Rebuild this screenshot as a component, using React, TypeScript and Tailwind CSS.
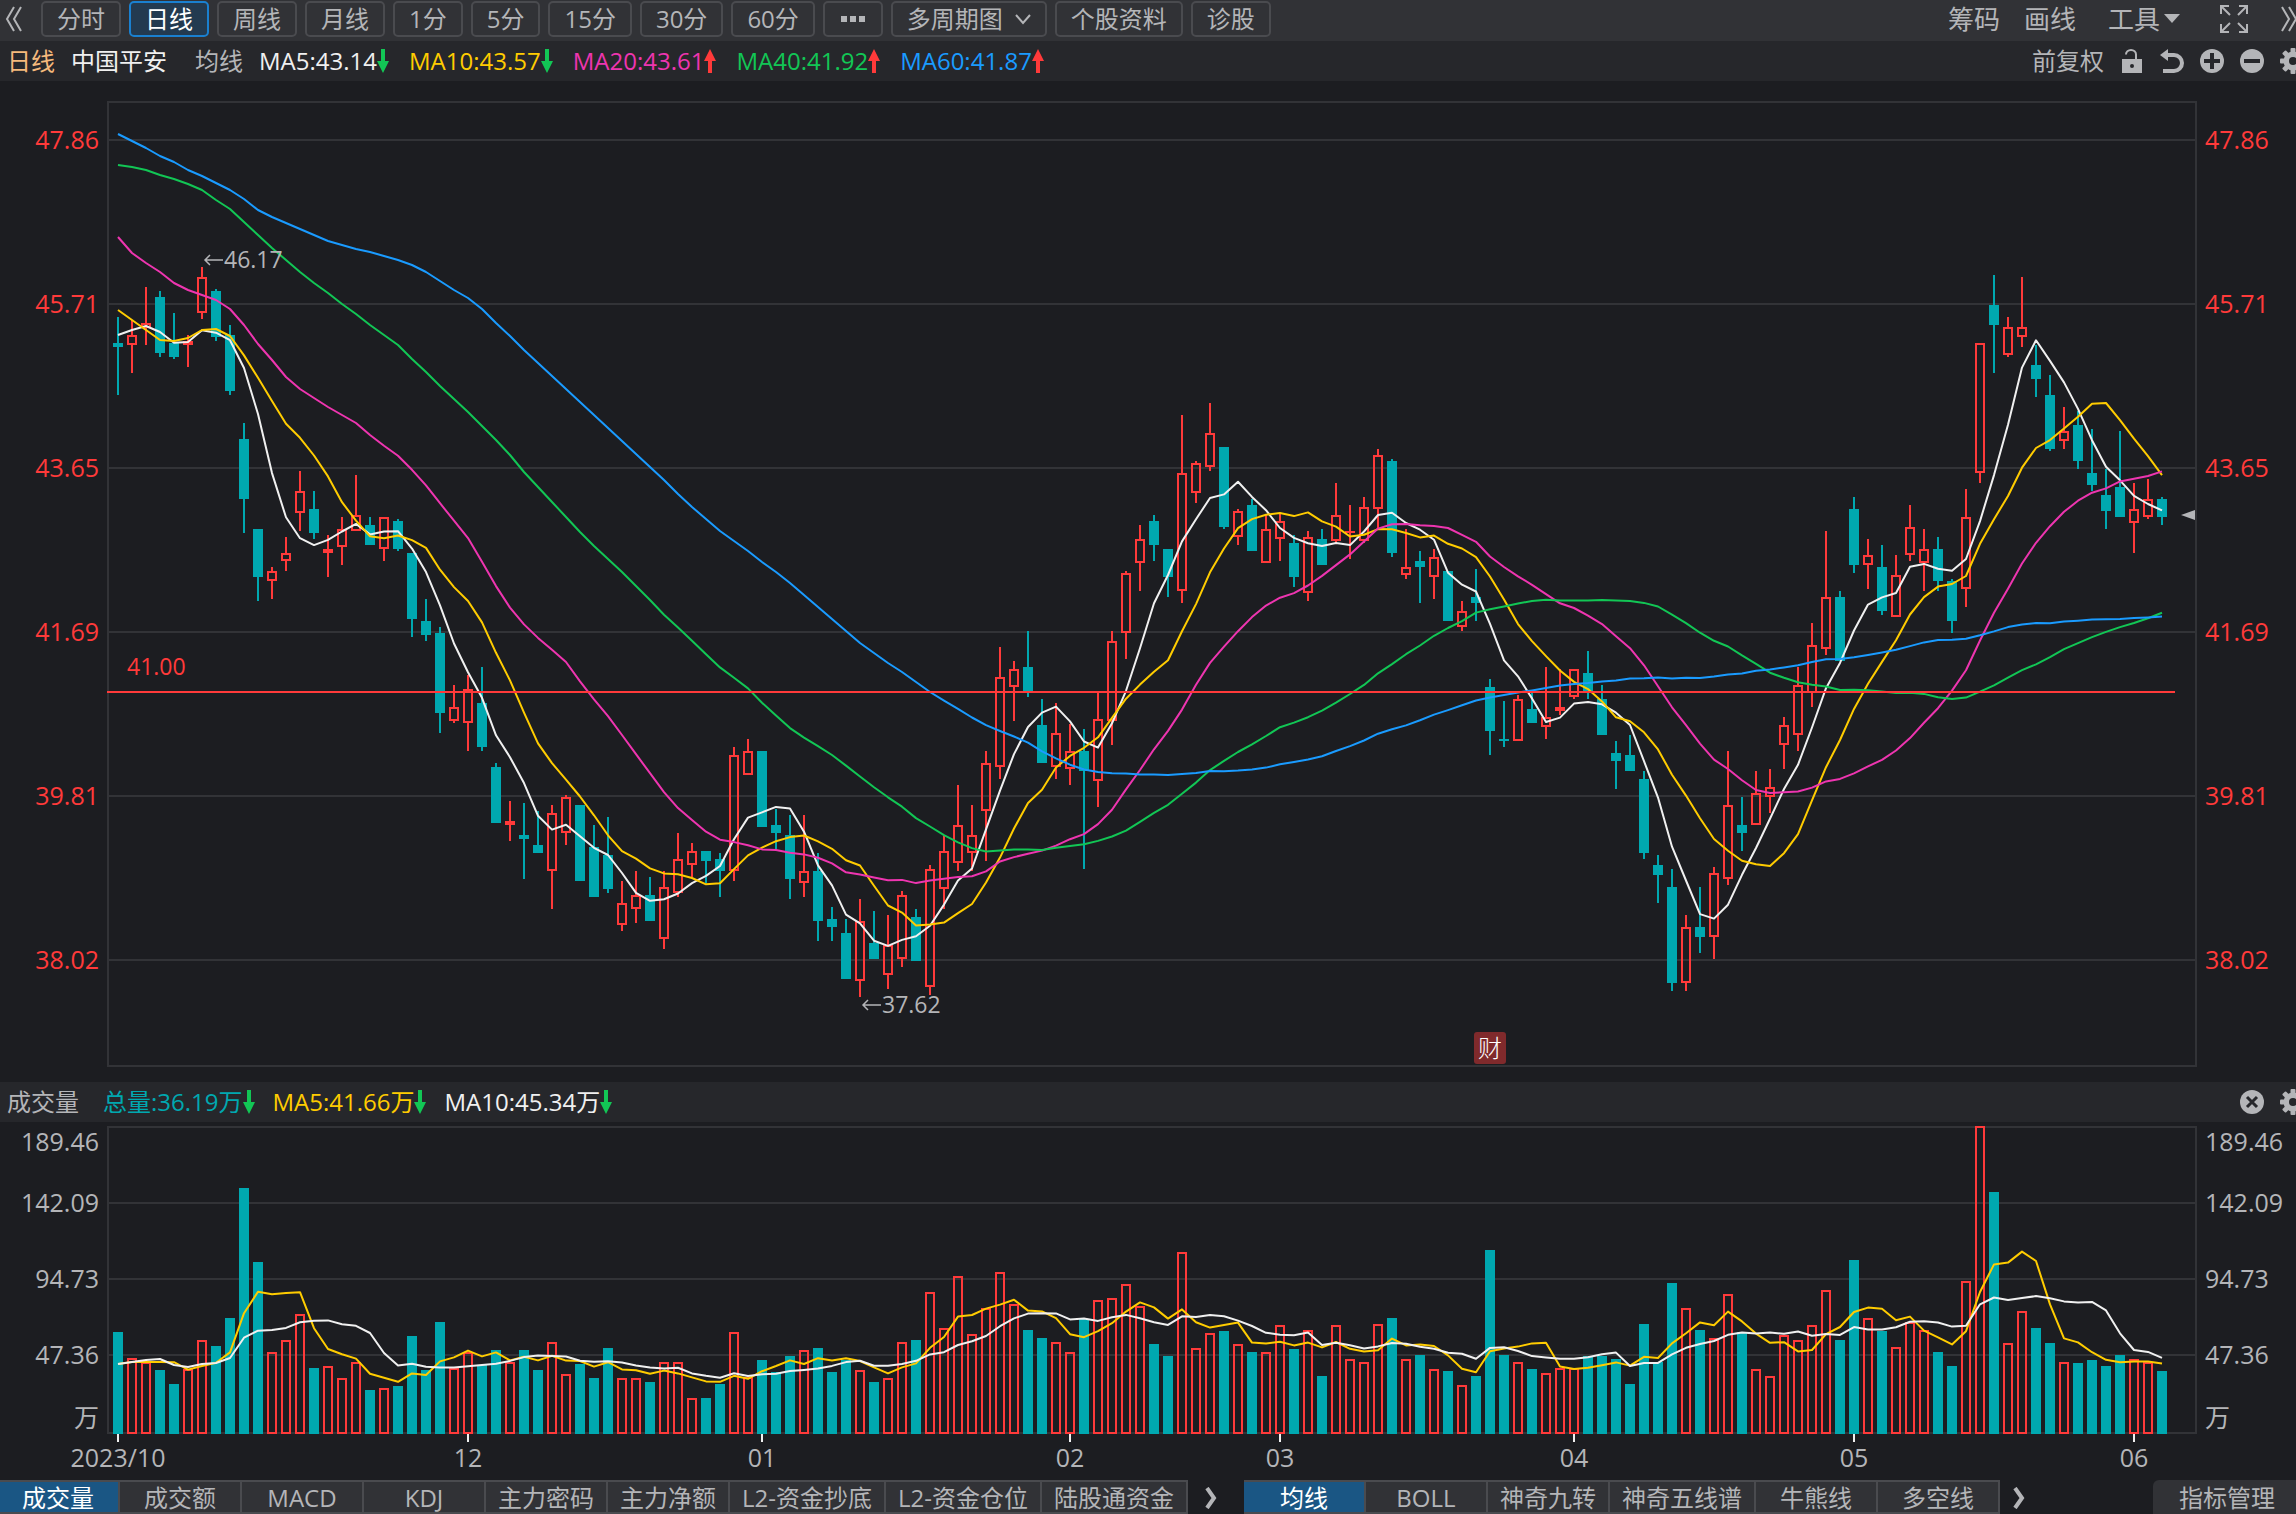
import React from "react";

type Row = [number, number, number, number, number, number];

// one row per trading day: rising, high, low, body top, body bottom, volume top
const days: Row[] = [
  [0, 317, 395, 343, 347, 1332], [1, 320, 373, 335, 345, 1358], [1, 287, 345, 323, 328, 1362],
  [0, 291, 357, 297, 353, 1370], [0, 313, 359, 343, 357, 1384], [1, 335, 367, 341, 345, 1369],
  [1, 267, 319, 277, 313, 1340], [0, 289, 341, 291, 337, 1346], [0, 325, 395, 335, 391, 1318],
  [0, 423, 533, 439, 499, 1188], [0, 529, 601, 529, 577, 1262], [1, 567, 599, 571, 581, 1352],
  [1, 537, 571, 553, 561, 1340], [1, 471, 531, 491, 513, 1314], [0, 491, 539, 509, 533, 1368],
  [1, 535, 577, 549, 553, 1366], [1, 517, 565, 529, 547, 1378], [1, 475, 531, 515, 531, 1362],
  [0, 517, 545, 525, 545, 1390], [1, 517, 561, 517, 549, 1388], [0, 519, 551, 521, 549, 1386],
  [0, 553, 637, 553, 619, 1336], [0, 599, 641, 621, 635, 1370], [0, 627, 733, 633, 713, 1322],
  [1, 685, 723, 707, 721, 1368], [1, 675, 751, 689, 723, 1352], [0, 667, 751, 703, 747, 1365],
  [0, 763, 823, 767, 823, 1350], [1, 801, 841, 821, 825, 1362], [0, 803, 879, 835, 839, 1350],
  [0, 811, 853, 845, 853, 1370], [1, 805, 909, 813, 871, 1342], [1, 795, 845, 797, 833, 1374],
  [0, 805, 881, 805, 881, 1364], [0, 825, 897, 847, 897, 1378], [0, 817, 893, 855, 889, 1348],
  [1, 881, 931, 903, 925, 1378], [1, 871, 923, 895, 909, 1378], [0, 877, 921, 895, 921, 1382],
  [1, 871, 949, 887, 939, 1362], [1, 833, 897, 859, 893, 1362], [1, 843, 877, 851, 865, 1398],
  [0, 851, 883, 851, 861, 1398], [0, 853, 897, 859, 871, 1384], [1, 747, 881, 755, 871, 1332],
  [1, 739, 775, 751, 775, 1377], [0, 751, 827, 751, 827, 1360], [0, 809, 849, 825, 833, 1372],
  [0, 815, 899, 835, 879, 1356], [1, 815, 897, 871, 883, 1350], [0, 853, 941, 871, 921, 1348],
  [0, 907, 941, 919, 927, 1372], [0, 919, 979, 933, 979, 1360], [1, 899, 997, 921, 981, 1370],
  [0, 911, 959, 943, 959, 1382], [1, 915, 989, 945, 975, 1378], [1, 891, 967, 895, 959, 1342],
  [0, 909, 961, 917, 961, 1340], [1, 865, 995, 869, 987, 1292], [1, 835, 909, 851, 889, 1328],
  [1, 785, 871, 825, 863, 1276], [1, 805, 871, 835, 853, 1334], [1, 751, 861, 763, 811, 1308],
  [1, 647, 779, 677, 767, 1272], [1, 661, 721, 669, 687, 1304], [0, 631, 697, 667, 691, 1330],
  [0, 699, 763, 725, 763, 1338], [1, 703, 779, 733, 767, 1342], [1, 724, 785, 751, 769, 1352],
  [0, 729, 869, 751, 771, 1319], [1, 693, 807, 719, 781, 1300], [1, 631, 745, 641, 721, 1298],
  [1, 571, 659, 573, 633, 1284], [1, 525, 591, 539, 563, 1306], [0, 515, 561, 521, 545, 1344],
  [0, 549, 597, 549, 577, 1356], [1, 415, 603, 473, 591, 1252], [1, 461, 503, 463, 493, 1348],
  [1, 403, 471, 433, 467, 1333], [0, 447, 529, 447, 527, 1331], [1, 509, 545, 511, 537, 1344],
  [0, 499, 551, 505, 551, 1352], [1, 515, 563, 529, 563, 1352], [1, 513, 561, 521, 539, 1325],
  [0, 535, 587, 543, 577, 1349], [1, 531, 601, 537, 593, 1330], [0, 529, 565, 539, 565, 1376],
  [1, 483, 543, 515, 541, 1325], [1, 505, 559, 531, 533, 1359], [1, 497, 543, 507, 541, 1362],
  [1, 449, 529, 455, 509, 1324], [0, 459, 557, 461, 553, 1318], [1, 529, 579, 567, 575, 1359],
  [0, 551, 603, 561, 567, 1355], [1, 549, 599, 557, 577, 1369], [0, 571, 621, 571, 621, 1371],
  [1, 601, 631, 611, 627, 1385], [0, 569, 621, 597, 603, 1376], [0, 679, 755, 687, 731, 1250],
  [0, 701, 747, 739, 741, 1355], [1, 695, 741, 699, 741, 1362], [0, 693, 723, 709, 723, 1369],
  [1, 667, 739, 717, 727, 1373], [1, 669, 715, 707, 711, 1368], [1, 669, 699, 669, 697, 1368],
  [0, 651, 699, 673, 693, 1356], [0, 685, 735, 699, 735, 1356], [0, 741, 789, 753, 761, 1359],
  [0, 735, 771, 755, 771, 1384], [0, 771, 859, 779, 853, 1324], [0, 855, 903, 865, 875, 1362],
  [0, 869, 991, 887, 983, 1283], [1, 915, 991, 927, 983, 1308], [0, 887, 953, 927, 937, 1330],
  [1, 867, 959, 873, 937, 1338], [1, 751, 885, 805, 879, 1294], [0, 797, 851, 825, 833, 1332],
  [1, 771, 825, 793, 825, 1369], [1, 769, 813, 787, 797, 1376], [1, 717, 769, 725, 745, 1335],
  [1, 667, 751, 685, 735, 1340], [1, 623, 707, 645, 693, 1325], [1, 531, 655, 597, 649, 1290],
  [0, 591, 661, 597, 661, 1340], [0, 497, 573, 509, 565, 1260], [1, 539, 589, 555, 565, 1318],
  [0, 545, 615, 567, 611, 1331], [1, 555, 617, 575, 617, 1347], [1, 505, 561, 527, 555, 1322],
  [1, 529, 591, 549, 563, 1330], [0, 537, 591, 549, 581, 1352], [0, 579, 633, 581, 621, 1366],
  [1, 489, 607, 517, 589, 1281], [1, 343, 483, 343, 473, 1126], [0, 275, 373, 305, 325, 1192],
  [1, 317, 357, 327, 355, 1343], [1, 277, 347, 327, 337, 1311], [0, 345, 397, 365, 379, 1328],
  [0, 375, 451, 395, 449, 1343], [1, 407, 449, 431, 441, 1362], [0, 411, 469, 425, 461, 1363],
  [0, 429, 491, 473, 485, 1360], [0, 469, 529, 495, 511, 1366], [0, 431, 517, 487, 517, 1355],
  [1, 483, 553, 509, 523, 1359], [1, 479, 519, 499, 517, 1362], [0, 497, 525, 499, 517, 1371],
];

const RED = "#ff3a3a";
const TEAL = "#00a8b0";
const LINE = "#323337";
const TEXT = "#b4b5b8";

const dayX = (i: number) => 118 + i * 14;

// the price axis is logarithmic
const K = Math.log(47.86 / 38.02) / 820;
const toPrice = (y: number) => 47.86 * Math.exp(-(y - 140) * K);
const toY = (p: number) => 140 - Math.log(p / 47.86) / K;

const closes = days.map((d) => toPrice(d[0] ? d[3] + 1 : d[4] - 1));
const volumes = days.map((d) => d[5] + 1);

// the first n - 1 averages depend on earlier days, so they are given as `head`
function average(values: number[], n: number, head: number[]) {
  const out = [...head];
  for (let i = n - 1; i < values.length; i++) {
    let sum = 0;
    for (let j = i - n + 1; j <= i; j++) sum += values[j];
    out[i] = sum / n;
  }
  return out;
}

const priceLine = (n: number, head: number[]) => average(closes, n, head.map(toPrice)).map(toY);

const averages = [
  { color: "#f0f0f0", ys: priceLine(5, [335, 330, 326, 332]) },
  { color: "#ffcc00", ys: priceLine(10, [310, 320, 330, 340, 341, 338, 330, 329, 336]) },
  {
    color: "#ee35b0",
    ys: priceLine(20, [237, 253, 263, 272, 283, 290, 295, 300, 309, 325, 344, 360, 377, 389, 398, 407, 415, 423, 435]),
  },
  {
    color: "#12c655",
    ys: priceLine(40, [
      165, 167, 170, 175, 179, 184, 190, 200, 209, 222, 235, 248, 260, 272, 283, 293, 304, 314, 325, 335,
      345, 359, 372, 386, 399, 412, 426, 440, 455, 472, 487, 502, 517, 532, 546, 559, 572, 586, 600,
    ]),
  },
  {
    color: "#1a9bff",
    ys: priceLine(60, [
      134, 141, 148, 156, 162, 170, 176, 183, 190, 199, 210, 217, 223, 229, 235, 241, 245, 249, 252, 256,
      260, 265, 272, 281, 290, 298, 309, 323, 336, 350, 363, 376, 389, 402, 415, 428, 441, 454, 467, 480,
      494, 507, 519, 531, 541, 551, 562, 572, 583, 595, 607, 619, 631, 643, 653, 663, 672, 682, 692,
    ]),
  },
];

const volumeAverages = [
  { color: "#ffcc00", ys: average(volumes, 5, [1364, 1362, 1362, 1362]) },
  { color: "#f0f0f0", ys: average(volumes, 10, [1364, 1362, 1360, 1359, 1365, 1367, 1364, 1363, 1358]) },
];

const priceLabels = ["47.86", "45.71", "43.65", "41.69", "39.81", "38.02"];
const volumeLabels: [string, number][] = [
  ["189.46", 1142], ["142.09", 1203], ["94.73", 1279], ["47.36", 1355], ["万", 1418],
];
const months: [string, number][] = [
  ["2023/10", 0], ["12", 25], ["01", 46], ["02", 68], ["03", 83], ["04", 104], ["05", 124], ["06", 144],
];

function Curve({ ys, color }: { ys: number[]; color: string }) {
  const points = ys.map((y, i) => `${dayX(i)},${y.toFixed(1)}`).join(" ");
  return <polyline points={points} fill="none" stroke={color} strokeWidth="2" strokeLinejoin="round" />;
}

function Box({ i, up, top, bottom }: { i: number; up: boolean; top: number; bottom: number }) {
  const x = dayX(i) - 5;
  if (!up || bottom - top < 5) {
    return <rect x={x} y={top} width="10" height={bottom - top} fill={up ? RED : TEAL} />;
  }
  return <rect x={x + 1} y={top + 1} width="8" height={bottom - top - 2} fill="none" stroke={RED} strokeWidth="2" />;
}

function PriceChart() {
  return (
    <svg viewBox="0 81 2296 1001" className="block w-full text-[25px]" role="img" aria-label="日线">
      <g stroke={LINE} strokeWidth="2" fill="none" shapeRendering="crispEdges">
        <rect x="108" y="102" width="2088" height="964" />
        {priceLabels.map((label, i) => (
          <path key={label} d={`M108 ${140 + i * 164}H2196`} />
        ))}
      </g>
      {priceLabels.map((label, i) => (
        <g key={label} fill={RED}>
          <text x="99" y={149 + i * 164} textAnchor="end">{label}</text>
          <text x="2205" y={149 + i * 164}>{label}</text>
        </g>
      ))}
      <g shapeRendering="crispEdges">
        {days.map(([up, high, low, top, bottom], i) => (
          <g key={i}>
            <path d={`M${dayX(i)} ${high}V${top}M${dayX(i)} ${bottom}V${low}`} stroke={up ? RED : TEAL} strokeWidth="2" />
            <Box i={i} up={up === 1} top={top} bottom={bottom} />
          </g>
        ))}
      </g>
      {averages.map((line) => (
        <Curve key={line.color} {...line} />
      ))}
      <path d="M107 692H2175" stroke={RED} strokeWidth="2" />
      <g fill={TEXT} className="text-[23px]">
        <text x="127" y="675" fill={RED}>41.00</text>
        <text x="224" y="268">46.17</text>
        <text x="882" y="1013">37.62</text>
      </g>
      <path d="M2181 515L2195 510V520Z" fill={TEXT} />
      <g fill="none" stroke={TEXT} strokeWidth="1.5">
        <path d="M223 260H205M210 255L205 260L210 265" />
        <path d="M881 1005H863M868 1000L863 1005L868 1010" />
      </g>
      <rect x="1474" y="1032" width="32" height="32" rx="3" fill="#802a2c" />
      <text x="1490" y="1057" textAnchor="middle" fill="#fff" className="text-[24px] font-light">财</text>
    </svg>
  );
}

function VolumeChart() {
  return (
    <svg viewBox="0 1122 2296 358" className="block w-full text-[25px]" role="img" aria-label="成交量">
      <g stroke={LINE} strokeWidth="2" fill="none" shapeRendering="crispEdges">
        <rect x="108" y="1127" width="2088" height="306" />
        <path d="M108 1203H2196M108 1279H2196M108 1355H2196" />
      </g>
      {volumeLabels.map(([label, y]) => (
        <g key={label} fill={TEXT}>
          <text x="99" y={y + 9} textAnchor="end">{label}</text>
          <text x="2205" y={y + 9}>{label}</text>
        </g>
      ))}
      <g shapeRendering="crispEdges">
        {days.map((d, i) => (
          <Box key={i} i={i} up={d[0] === 1} top={d[5]} bottom={1434} />
        ))}
      </g>
      {volumeAverages.map((line) => (
        <Curve key={line.color} {...line} />
      ))}
      {months.map(([label, i]) => (
        <g key={label}>
          <path d={`M${dayX(i)} 1434V1442`} stroke="#f0f0f0" strokeWidth="2" />
          <text x={dayX(i)} y="1467" textAnchor="middle" fill={TEXT}>{label}</text>
        </g>
      ))}
    </svg>
  );
}

function Trend({ up = false }: { up?: boolean }) {
  return (
    <svg viewBox="0 0 12 24" className="h-6 w-3 shrink-0">
      {up ? (
        <path d="M6 0L12 12H8V24H4V12H0Z" fill="#ff3a3a" />
      ) : (
        <path d="M6 24L12 12H8V0H4V12H0Z" fill="#12c655" />
      )}
    </svg>
  );
}

function Gear() {
  return (
    <svg viewBox="0 0 26 26" className="size-[26px]">
      <g fill="currentColor">
        {[0, 45, 90, 135].map((a) => (
          <rect key={a} x="10.5" y="0" width="5" height="26" rx="1" transform={`rotate(${a} 13 13)`} />
        ))}
        <circle cx="13" cy="13" r="9.5" />
      </g>
      <circle cx="13" cy="13" r="4" fill="#26272b" />
    </svg>
  );
}

function DoubleChevron({ flip = false }: { flip?: boolean }) {
  return (
    <svg viewBox="0 0 18 26" className={flip ? "h-[26px] w-[18px] rotate-180" : "h-[26px] w-[18px]"}>
      <path d="M9 1L2 13L9 25M16 1L9 13L16 25" fill="none" stroke="currentColor" strokeWidth="2" />
    </svg>
  );
}

function Chevron() {
  return (
    <svg viewBox="0 0 14 22" className="h-[22px] w-3.5">
      <path d="M3 1L10 11L3 21" fill="none" stroke="currentColor" strokeWidth="4" />
    </svg>
  );
}

const periods = ["分时", "日线", "周线", "月线", "1分", "5分", "15分", "30分", "60分"];
const periodClass = "flex h-9 shrink-0 items-center rounded-[5px] border-2 px-3.5";

function Toolbar() {
  return (
    <header className="flex h-[41px] items-center overflow-hidden bg-[#313236] pb-1">
      <button aria-label="收起" className="ml-[5px] mr-[18px] shrink-0">
        <DoubleChevron />
      </button>
      <nav className="flex gap-2">
        {periods.map((p) => (
          <button
            key={p}
            className={`${periodClass} ${p === "日线" ? "border-[#1a80d0] bg-[#233a50] text-white" : "border-[#4a4b4f]"}`}
          >
            {p}
          </button>
        ))}
        <button aria-label="更多周期" className={`${periodClass} w-[60px] justify-center gap-[3px] border-[#4a4b4f]`}>
          <span className="size-1.5 shrink-0 bg-[#b4b5b8]" />
          <span className="size-1.5 shrink-0 bg-[#b4b5b8]" />
          <span className="size-1.5 shrink-0 bg-[#b4b5b8]" />
        </button>
        <button className={`${periodClass} gap-3 border-[#4a4b4f]`}>
          多周期图
          <svg viewBox="0 0 16 12" className="h-3 w-4">
            <path d="M1 2L8 10L15 2" fill="none" stroke="currentColor" strokeWidth="2" />
          </svg>
        </button>
        <button className={`${periodClass} border-[#4a4b4f]`}>个股资料</button>
        <button className={`${periodClass} border-[#4a4b4f]`}>诊股</button>
      </nav>
      <div className="ml-auto -mr-0.5 flex shrink-0 items-center text-[26px]">
        <button>筹码</button>
        <button className="ml-6">画线</button>
        <button className="ml-8 flex items-center gap-1">
          工具
          <svg viewBox="0 0 16 9" className="h-[9px] w-4">
            <path d="M0 0H16L8 9Z" fill="currentColor" />
          </svg>
        </button>
        <button aria-label="全屏" className="ml-10">
          <svg viewBox="0 0 28 28" className="size-7">
            <path
              d="M1 9V1H9M1 1L10 10M19 1H27V9M27 1L18 10M1 19V27H9M1 27L10 18M19 27H27V19M27 27L18 18"
              fill="none"
              stroke="currentColor"
              strokeWidth="2"
            />
          </svg>
        </button>
        <button aria-label="展开" className="ml-8">
          <DoubleChevron flip />
        </button>
      </div>
    </header>
  );
}

function InfoBar() {
  return (
    <section className="flex h-10 items-center overflow-hidden whitespace-nowrap bg-[#26272b] pl-[7px]">
      <span className="text-[#f5b97c]">日线</span>
      <span className="ml-4 text-[#f0f0f0]">中国平安</span>
      <span className="ml-7">均线</span>
      <div className="ml-4 flex gap-5">
        <span className="flex items-center text-[#f0f0f0]">MA5:43.14<Trend /></span>
        <span className="flex items-center text-[#ffcc00]">MA10:43.57<Trend /></span>
        <span className="flex items-center text-[#ee35b0]">MA20:43.61<Trend up /></span>
        <span className="flex items-center text-[#12c655]">MA40:41.92<Trend up /></span>
        <span className="flex items-center text-[#1a9bff]">MA60:41.87<Trend up /></span>
      </div>
      <div className="ml-auto -mr-2.5 flex shrink-0 items-center gap-4">
        <button>前复权</button>
        <button aria-label="锁定">
          <svg viewBox="0 0 24 24" className="size-6">
            <path d="M6 5.5A5 4.5 0 0 1 16 5.5V11" fill="none" stroke="currentColor" strokeWidth="2" />
            <path d="M2 10H22V24H2ZM12 15A2 2 0 1 0 12 19A2 2 0 1 0 12 15Z" fill="currentColor" fillRule="evenodd" />
          </svg>
        </button>
        <button aria-label="撤销">
          <svg viewBox="0 0 24 24" className="size-6">
            <path d="M0 6L8 0V12Z" fill="currentColor" />
            <path d="M6 6H14A8 8 0 0 1 14 22H3" fill="none" stroke="currentColor" strokeWidth="4" />
          </svg>
        </button>
        <button aria-label="放大">
          <svg viewBox="0 0 24 24" className="size-6">
            <circle cx="12" cy="12" r="12" fill="currentColor" />
            <path d="M4 12H20M12 4V20" stroke="#26272b" strokeWidth="4" />
          </svg>
        </button>
        <button aria-label="缩小">
          <svg viewBox="0 0 24 24" className="size-6">
            <circle cx="12" cy="12" r="12" fill="currentColor" />
            <path d="M4 12H20" stroke="#26272b" strokeWidth="4" />
          </svg>
        </button>
        <button aria-label="设置"><Gear /></button>
      </div>
    </section>
  );
}

function VolumeBar() {
  return (
    <section className="flex h-10 items-center overflow-hidden whitespace-nowrap bg-[#26272b] pl-[7px]">
      <span>成交量</span>
      <div className="ml-6 flex gap-[18px]">
        <span className="flex items-center text-[#00a8b0]">总量:36.19万<Trend /></span>
        <span className="flex items-center text-[#ffcc00]">MA5:41.66万<Trend /></span>
        <span className="flex items-center text-[#f0f0f0]">MA10:45.34万<Trend /></span>
      </div>
      <div className="ml-auto -mr-2.5 flex shrink-0 items-center gap-4">
        <button aria-label="关闭">
          <svg viewBox="0 0 24 24" className="size-6">
            <circle cx="12" cy="12" r="12" fill="currentColor" />
            <path d="M7 7L17 17M17 7L7 17" stroke="#26272b" strokeWidth="3" />
          </svg>
        </button>
        <button aria-label="设置"><Gear /></button>
      </div>
    </section>
  );
}

function Tabs({ items }: { items: string[] }) {
  return (
    <div className="flex shrink-0 border-y-2 border-[#4a4b4f]">
      {items.map((item, i) => (
        <button
          key={item}
          className={`min-w-[122px] border-r-2 border-[#4a4b4f] px-3 pt-0.5 leading-7 ${
            i === 0 ? "bg-[#1a5684] text-white" : "bg-[#313236]"
          }`}
        >
          {item}
        </button>
      ))}
    </div>
  );
}

function IndicatorBar() {
  return (
    <footer className="-ml-0.5 flex h-[34px] overflow-hidden whitespace-nowrap">
      <Tabs items={["成交量", "成交额", "MACD", "KDJ", "主力密码", "主力净额", "L2-资金抄底", "L2-资金仓位", "陆股通资金"]} />
      <button aria-label="更多副图指标" className="w-14 shrink-0 pl-4 pt-0.5"><Chevron /></button>
      <Tabs items={["均线", "BOLL", "神奇九转", "神奇五线谱", "牛熊线", "多空线"]} />
      <button aria-label="更多主图指标" className="w-14 shrink-0 pl-3 pt-0.5"><Chevron /></button>
      <button className="ml-auto shrink-0 rounded-tl-md bg-[#313236] pl-[26px] pr-[21px] pt-0.5">指标管理</button>
    </footer>
  );
}

export default function App() {
  return (
    <main className="min-h-screen overflow-x-hidden bg-[#1c1d21] font-['Open_Sans','Noto_Sans_CJK_SC',sans-serif] text-[24px] leading-8 text-[#b4b5b8]">
      <Toolbar />
      <InfoBar />
      <PriceChart />
      <VolumeBar />
      <VolumeChart />
      <IndicatorBar />
    </main>
  );
}
